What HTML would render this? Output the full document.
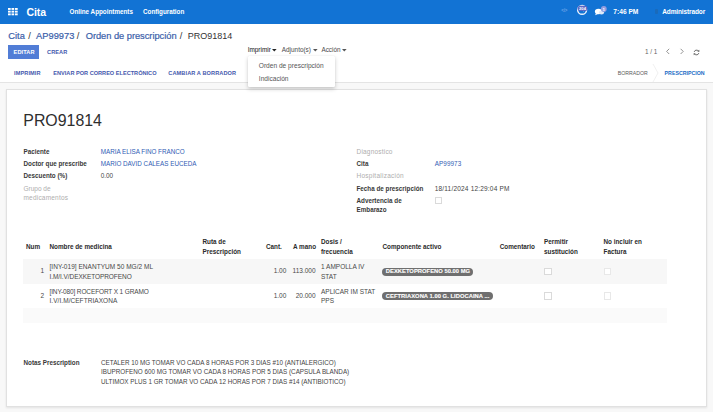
<!DOCTYPE html>
<html lang="es"><head><meta charset="utf-8"><title>PRO91814 - Odoo</title>
<style>
*{box-sizing:border-box;margin:0;padding:0}
html,body{width:713px;height:412px;overflow:hidden;background:#fff}
body{font-family:"Liberation Sans",sans-serif;color:#333;position:relative;font-size:6.5px}
.a{position:absolute;white-space:nowrap;line-height:1}
#nav{left:0;top:0;width:713px;height:23.5px;background:#1273d4}
#nav .a{color:#fff}
.bc{font-size:9.3px;color:#3a60aa;top:31.5px;-webkit-text-stroke:.2px #3a60aa}
.btn{font-weight:bold;font-size:5.6px;color:#4558ad;letter-spacing:.1px}
.lbl{font-weight:bold;font-size:6.3px;color:#383838}
.mut{font-size:6.5px;color:#aeaeae;letter-spacing:.12px}
.val{font-size:6.4px;color:#444}
.lnk{font-size:6.3px;color:#2f5cb4}
.th{font-weight:bold;font-size:6.35px;color:#2a2a2a;line-height:9.4px}
.td{font-size:6.5px;color:#484848;line-height:9.8px}
.r{text-align:right}
.pill{background:#6f6f6f;color:#fff;font-weight:bold;font-size:5.8px;border-radius:5px;height:8px;line-height:8.1px;text-align:left;padding-left:3.7px;-webkit-text-stroke:.1px #fff}
.cb{width:7.7px;height:7.7px;border:1px solid #dadada;background:#fff}
</style></head><body>
<!-- NAVBAR -->
<div id="nav" class="a">
  <svg class="a" style="left:8px;top:7.8px" width="10" height="8" viewBox="0 0 10 8"><g fill="#fff"><rect x="0" y="0" width="2.7" height="1.9"/><rect x="3.5" y="0" width="2.7" height="1.9"/><rect x="7" y="0" width="2.7" height="1.9"/><rect x="0" y="2.7" width="2.7" height="1.9"/><rect x="3.5" y="2.7" width="2.7" height="1.9"/><rect x="7" y="2.7" width="2.7" height="1.9"/><rect x="0" y="5.4" width="2.7" height="1.9"/><rect x="3.5" y="5.4" width="2.7" height="1.9"/><rect x="7" y="5.4" width="2.7" height="1.9"/></g></svg>
  <div class="a" style="left:26.5px;top:6.5px;font-size:10.5px;font-weight:bold;letter-spacing:-.1px">Cita</div>
  <div class="a" style="left:69.5px;top:8.6px;font-size:6.3px;font-weight:bold">Online Appointments</div>
  <div class="a" style="left:143px;top:8.6px;font-size:6.3px;font-weight:bold">Configuration</div>
  <div class="a" style="left:561.3px;top:9.4px;font-size:4.5px;letter-spacing:-.2px;color:#6ea4e8;font-weight:bold">&lt;/&gt;</div>
  <svg class="a" style="left:576px;top:4px" width="13" height="12" viewBox="0 0 13 12"><circle cx="6.1" cy="5.9" r="4.4" fill="none" stroke="#eaf1fb" stroke-width="1.5"/><path d="M6.1 3.5v2.6l1.6 1" stroke="#eaf1fb" stroke-width=".8" fill="none"/><rect x="1.6" y="1.8" width="9.8" height="5.2" rx="2.6" fill="#5b68c4"/><text x="6.5" y="6" font-size="4.1" font-weight="bold" fill="#fff" text-anchor="middle" font-family="Liberation Sans, sans-serif">204</text></svg>
  <svg class="a" style="left:594px;top:4.6px" width="16" height="12" viewBox="0 0 16 12"><ellipse cx="4.5" cy="6.5" rx="3.6" ry="2.8" fill="#fff"/><path d="M2 8 L1.2 10.2 L4 9z" fill="#fff"/><ellipse cx="7.5" cy="7.6" rx="2.6" ry="2" fill="#dfe9f8"/><circle cx="9.8" cy="4" r="2.9" fill="#939ddf"/><text x="9.8" y="5.5" font-size="4.4" font-weight="bold" fill="#fff" text-anchor="middle" font-family="Liberation Sans, sans-serif">1</text></svg>
  <div class="a" style="left:613.3px;top:8.9px;font-size:6.65px;font-weight:bold">7:46 PM</div>
  <div class="a" style="left:654.5px;top:9px;width:3.5px;height:5px;background:rgba(70,60,50,.16);border-radius:1px"></div>
  <div class="a" style="left:662.3px;top:8.9px;font-size:6.5px;font-weight:bold;letter-spacing:-.13px">Administrador</div>
</div>
<!-- BREADCRUMB -->
<div class="a bc" style="left:8.3px">Cita</div>
<div class="a bc" style="left:28.2px;color:#333;-webkit-text-stroke:0">/</div>
<div class="a bc" style="left:36.1px">AP99973</div>
<div class="a bc" style="left:76.7px;color:#333;-webkit-text-stroke:0">/</div>
<div class="a bc" style="left:85.7px;letter-spacing:-.03px">Orden de prescripción</div>
<div class="a bc" style="left:179.8px;color:#333;-webkit-text-stroke:0">/</div>
<div class="a bc" style="left:187.7px;color:#333;font-size:9px;top:31.7px;-webkit-text-stroke:0">PRO91814</div>
<!-- BUTTONS -->
<div class="a" style="left:8px;top:45px;width:31px;height:13.6px;background:#517dd6"></div>
<div class="a btn" style="left:13.6px;top:50.1px;color:#fff">EDITAR</div>
<div class="a btn" style="left:47px;top:50.1px">CREAR</div>
<div class="a" style="left:247.7px;top:46.8px;font-size:6.4px;color:#111">Imprimir</div>
<div class="a" style="left:281.8px;top:46.8px;font-size:6.4px;color:#4a4a4a">Adjunto(s)</div>
<div class="a" style="left:321.4px;top:46.8px;font-size:6.4px;color:#4a4a4a">Acción</div>
<svg class="a" style="left:272px;top:49px" width="5" height="3"><path d="M0 0h4.6L2.3 2.6z" fill="#222"/></svg>
<svg class="a" style="left:312.5px;top:49px" width="5" height="3"><path d="M0 0h4.6L2.3 2.6z" fill="#555"/></svg>
<svg class="a" style="left:341.5px;top:49px" width="5" height="3"><path d="M0 0h4.6L2.3 2.6z" fill="#555"/></svg>
<div class="a" style="left:644.9px;top:48.7px;font-size:6.4px;color:#666">1 / 1</div>
<svg class="a" style="left:665.3px;top:48px" width="6" height="7" viewBox="0 0 6 7"><path d="M4.2 0.8L1.6 3.4L4.2 6" stroke="#777" stroke-width="0.8" fill="none"/></svg>
<svg class="a" style="left:678.8px;top:48px" width="6" height="7" viewBox="0 0 6 7"><path d="M1.6 0.8L4.2 3.4L1.6 6" stroke="#777" stroke-width="0.8" fill="none"/></svg>
<svg class="a" style="left:693px;top:48.6px" width="7" height="7" viewBox="0 0 7 7"><path d="M1.2 2.9A2.4 2.4 0 0 1 5.3 1.9M5.8 4.1A2.4 2.4 0 0 1 1.7 5.1" stroke="#555" stroke-width="0.85" fill="none"/><path d="M4.3 2.6L6.4 2.7L6.2 0.7z" fill="#555"/><path d="M2.7 4.4L0.6 4.3L0.8 6.3z" fill="#555"/></svg>
<!-- STATUS BAR ROW -->
<div class="a btn" style="left:14px;top:71.4px">IMPRIMIR</div>
<div class="a btn" style="left:53.3px;top:71.4px;letter-spacing:0">ENVIAR POR CORREO ELECTRÓNICO</div>
<div class="a btn" style="left:168.3px;top:71.4px">CAMBIAR A BORRADOR</div>
<div class="a" style="left:617.8px;top:70.8px;font-size:5.2px;color:#5a5a5a">BORRADOR</div>
<div class="a" style="left:664.6px;top:70.8px;font-size:5.25px;color:#1b6cc6;font-weight:bold">PRESCRIPCION</div>
<svg class="a" style="left:651px;top:64px" width="9" height="18" viewBox="0 0 9 18"><path d="M2 0L7 9L2 18" stroke="#ececec" stroke-width="0.8" fill="none"/></svg>
<!-- GRAY BG + SHEET -->
<div class="a" style="left:0;top:81.7px;width:713px;height:331px;background:#f8f8f8;border-top:1px solid #e4e4e4"></div>
<div class="a" style="left:6px;top:88.5px;width:700.5px;height:318.3px;background:#fff;border:1px solid #e1e1e1;box-shadow:0 1px 2px rgba(0,0,0,.09)"></div>
<!-- DROPDOWN -->
<div class="a" style="left:247.7px;top:56px;width:87px;height:31px;background:#fff;box-shadow:0 2px 4px rgba(0,0,0,.2),0 0 1px rgba(0,0,0,.12);border-radius:1px"></div>
<div class="a" style="left:258.8px;top:62.5px;font-size:6.6px;color:#555">Orden de prescripción</div>
<div class="a" style="left:258.8px;top:75.8px;font-size:6.6px;color:#555">Indicación</div>
<!-- TITLE -->
<div class="a" style="left:23.3px;top:112.8px;font-size:15.9px;color:#2e2e2e">PRO91814</div>
<!-- LEFT GROUP -->
<div class="a lbl" style="left:23.5px;top:149px">Paciente</div>
<div class="a lnk" style="left:100.7px;top:149px">MARIA ELISA FINO FRANCO</div>
<div class="a lbl" style="left:23.5px;top:161px">Doctor que prescribe</div>
<div class="a lnk" style="left:100.7px;top:161px">MARIO DAVID CALEAS EUCEDA</div>
<div class="a lbl" style="left:23.5px;top:173px">Descuento (%)</div>
<div class="a val" style="left:100.7px;top:173px">0.00</div>
<div class="a mut" style="left:23.5px;top:183.8px;line-height:9.1px;letter-spacing:0">Grupo de<br><span style="letter-spacing:.2px">medicamentos</span></div>
<!-- RIGHT GROUP -->
<div class="a mut" style="left:356.5px;top:148.9px;letter-spacing:.2px">Diagnostico</div>
<div class="a lbl" style="left:356.5px;top:161px">Cita</div>
<div class="a lnk" style="left:434.7px;top:161px;letter-spacing:.1px">AP99973</div>
<div class="a mut" style="left:356.5px;top:173.2px;letter-spacing:.25px">Hospitalización</div>
<div class="a lbl" style="left:356.5px;top:185.5px">Fecha de prescripción</div>
<div class="a val" style="left:434.7px;top:186.3px;font-size:6.5px;letter-spacing:.19px">18/11/2024 12:29:04 PM</div>
<div class="a lbl" style="left:356.5px;top:195.6px;line-height:9.6px">Advertencia de<br>Embarazo</div>
<div class="a cb" style="left:434.8px;top:196.6px;width:7px;height:7.2px"></div>
<!-- TABLE -->
<div class="a" style="left:23px;top:258.6px;width:643.8px;height:25.2px;background:#f7f7f7"></div>
<div class="a" style="left:23px;top:307.6px;width:643.8px;height:15.6px;background:#fafafa"></div>
<div class="a th" style="left:26px;top:241.8px">Num</div>
<div class="a th" style="left:49.5px;top:241.8px">Nombre de medicina</div>
<div class="a th" style="left:202.5px;top:237.2px">Ruta de<br>Prescripción</div>
<div class="a th" style="left:266px;top:241.8px">Cant.</div>
<div class="a th" style="left:293px;top:241.8px">A mano</div>
<div class="a th" style="left:321px;top:237.2px">Dosis /<br>frecuencia</div>
<div class="a th" style="left:382.5px;top:241.8px">Componente activo</div>
<div class="a th" style="left:499.7px;top:241.8px">Comentario</div>
<div class="a th" style="left:544px;top:237.2px">Permitir<br>sustitución</div>
<div class="a th" style="left:603.5px;top:237.2px">No incluir en<br>Factura</div>
<!-- row 1 -->
<div class="a td" style="left:40.5px;top:266.3px">1</div>
<div class="a td" style="left:49.5px;top:261.5px;line-height:10.4px"><span style="letter-spacing:.03px">[INY-019] ENANTYUM 50 MG/2 ML</span><br><span style="letter-spacing:-.07px">I.M/I.V/DEXKETOPROFENO</span></div>
<div class="a td r" style="left:260px;width:26.3px;top:266.3px">1.00</div>
<div class="a td r" style="left:286px;width:29.6px;top:266.3px">113.000</div>
<div class="a td" style="left:321px;top:261.5px;line-height:10.4px">1 AMPOLLA IV<br>STAT</div>
<div class="a pill" style="left:382.1px;top:267.5px;width:91.2px;letter-spacing:.03px;line-height:7.7px">DEXKETOPROFENO 50.00 MG</div>
<div class="a cb" style="left:544.1px;top:267.8px"></div>
<div class="a cb" style="left:603.7px;top:267.8px;border-color:#e8e8e8"></div>
<!-- row 2 -->
<div class="a td" style="left:40.5px;top:290.8px">2</div>
<div class="a td" style="left:49.5px;top:286.6px;line-height:9.6px"><span style="letter-spacing:-.13px">[INY-080] ROCEFORT X 1 GRAMO</span><br><span style="letter-spacing:.05px">I.V/I.M/CEFTRIAXONA</span></div>
<div class="a td r" style="left:260px;width:26.3px;top:290.8px">1.00</div>
<div class="a td r" style="left:286px;width:29.6px;top:290.8px">20.000</div>
<div class="a td" style="left:321px;top:286.6px;line-height:9.6px">APLICAR IM STAT<br>PPS</div>
<div class="a pill" style="left:382.1px;top:292.1px;width:110.8px;letter-spacing:.04px">CEFTRIAXONA 1.00 G. LIDOCAINA ...</div>
<div class="a cb" style="left:544.1px;top:292.3px"></div>
<div class="a cb" style="left:603.7px;top:292.3px;border-color:#e8e8e8"></div>
<!-- NOTES -->
<div class="a lbl" style="left:23.5px;top:360.3px">Notas Prescription</div>
<div class="a val" style="left:101px;top:357.8px;line-height:9.45px;font-size:6.3px">CETALER 10 MG TOMAR VO CADA 8 HORAS POR 3 DIAS #10 (ANTIALERGICO)<br>IBUPROFENO 600 MG TOMAR VO CADA 8 HORAS POR 5 DIAS (CAPSULA BLANDA)<br>ULTIMOX PLUS 1 GR TOMAR VO CADA 12 HORAS POR 7 DIAS #14 (ANTIBIOTICO)</div>
</body></html>
